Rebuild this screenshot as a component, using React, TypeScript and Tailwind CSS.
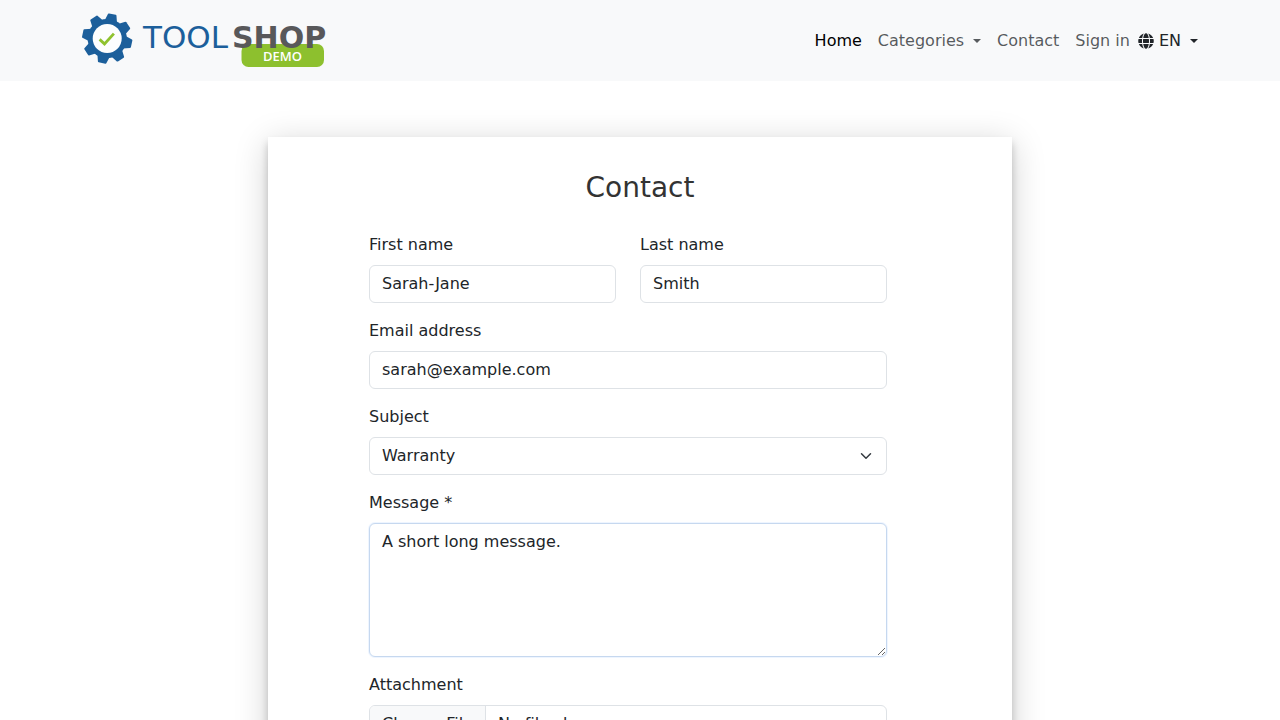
import { useState } from "react";
import type { ReactNode } from "react";
import { FaGlobe } from "react-icons/fa";

const toothAngles = [12, 57, 102, 147, 192, 237, 282, 327];

function Logo() {
  return (
    <svg width="246" height="55" viewBox="0 0 246 55" role="img" aria-label="Toolshop demo">
      <g transform="translate(25.2 25.6)">
        <g fill="#1c5f9b">
          <circle r="19.6" />
          {toothAngles.map((angle) => (
            <path key={angle} d="M-6.4 -17 L-4.3 -24.4 Q-4.1 -25 -3.4 -25 H3.4 Q4.1 -25 4.3 -24.4 L6.4 -17 Z" transform={`rotate(${angle})`} />
          ))}
        </g>
        <circle r="14.5" fill="#fcfdfe" />
        <path d="M-7.6 .8 L-2.7 5.3 L6.7 -5" fill="none" stroke="#8fc22f" strokeWidth="2.8" />
      </g>
      <rect x="159.5" y="31" width="82.5" height="23" rx="7" fill="#8dc02e" />
      <text x="61" y="35" fontSize="31" fill="#1c5f9b" fontFamily="'DejaVu Sans', sans-serif">
        TOOL
      </text>
      <text x="150" y="35" fontSize="30" fontWeight="700" fill="#58585a" fontFamily="'DejaVu Sans', sans-serif">
        SHOP
      </text>
      <text x="200.5" y="47.5" fontSize="13" fontWeight="600" textAnchor="middle" fill="#fff" fontFamily="'Open Sans', sans-serif">
        DEMO
      </text>
    </svg>
  );
}

function Caret() {
  return <span aria-hidden="true" className="ml-[9px] inline-block border-x-4 border-t-4 border-x-transparent border-t-current" />;
}

function Field({ id, label, children }: { id: string; label: string; children: ReactNode }) {
  return (
    <div className="mb-4 flex min-w-0 flex-1 flex-col">
      <label htmlFor={id} className="mb-2 self-start">
        {label}
      </label>
      {children}
    </div>
  );
}

const control = "h-[38px] w-full rounded-md border border-[#dee2e6] bg-white px-3 outline-none focus:border-[#86b7fe]";

export default function App() {
  const [message, setMessage] = useState("A short long message.");

  return (
    <div className="min-h-screen bg-white font-['DejaVu_Sans',sans-serif] text-base leading-6 text-[#212529]">
      <header className="bg-[#f8f9fa]">
        <div className="mx-auto flex max-w-[1140px] flex-wrap items-center justify-between px-3 py-[13px]">
          <a href="#home">
            <Logo />
          </a>
          <nav className="flex flex-wrap items-center text-[#212529]/75">
            <a href="#home" className="px-2 text-black">
              Home
            </a>
            <button type="button" className="flex items-center px-2">
              Categories
              <Caret />
            </button>
            <a href="#contact" className="px-2">
              Contact
            </a>
            <a href="#signin" className="px-2">
              Sign in
            </a>
            <button type="button" className="flex items-center text-[#212529]">
              <FaGlobe aria-hidden="true" className="mr-[5px] size-4" />
              EN
              <Caret />
            </button>
          </nav>
        </div>
      </header>

      <main className="mx-auto mt-14 max-w-[744px] bg-white pt-8 pb-16 shadow-[0_6px_32px_rgba(0,0,0,0.18),0_6px_8px_rgba(0,0,0,0.2)]">
        <h1 className="mb-[26px] text-center text-[28px] leading-[38px] text-[#333]">Contact</h1>
        <form className="pr-[125px] pl-[101px]" onSubmit={(event) => event.preventDefault()}>
          <div className="flex gap-6">
            <Field id="first-name" label="First name">
              <input id="first-name" type="text" defaultValue="Sarah-Jane" className={`${control} pb-0.5`} />
            </Field>
            <Field id="last-name" label="Last name">
              <input id="last-name" type="text" defaultValue="Smith" className={`${control} pb-0.5`} />
            </Field>
          </div>
          <Field id="email" label="Email address">
            <input id="email" type="email" defaultValue="sarah@example.com" className={`${control} pb-0.5`} />
          </Field>
          <Field id="subject" label="Subject">
            <div className="relative">
              <select id="subject" defaultValue="Warranty" className={`${control} appearance-none`}>
                <option>Warranty</option>
              </select>
              <svg aria-hidden="true" viewBox="0 0 16 16" className="pointer-events-none absolute top-[13px] right-[15px] h-3 w-3">
                <path d="m2 5 6 6 6-6" fill="none" stroke="#343a40" strokeWidth="2" strokeLinecap="round" strokeLinejoin="round" />
              </svg>
            </div>
          </Field>
          <Field id="message" label="Message *">
            <textarea
              id="message"
              rows={5}
              value={message}
              onChange={(event) => setMessage(event.target.value)}
              className="block w-full resize-y rounded-md border border-[#c6d8ef] bg-white px-3 py-1.5 shadow-[0_0_0_1px_rgba(13,110,253,0.07)] outline-none"
            />
          </Field>
          <Field id="attachment" label="Attachment">
            <input
              id="attachment"
              type="file"
              className="h-[38px] w-full overflow-hidden rounded-md border border-[#dee2e6] bg-white file:mr-3 file:h-9 file:border-0 file:border-r file:border-solid file:border-[#dee2e6] file:bg-[#f8f9fa] file:px-3 file:text-[#212529]"
            />
          </Field>
        </form>
      </main>
    </div>
  );
}
